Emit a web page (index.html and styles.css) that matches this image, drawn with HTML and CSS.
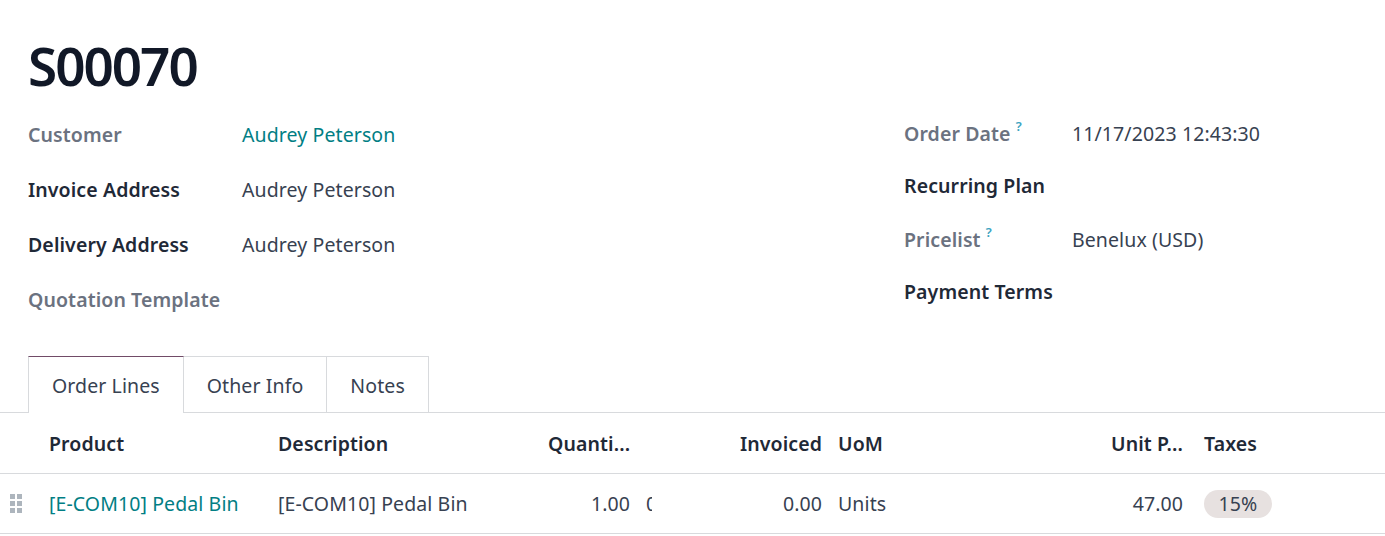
FILE: index.html
```html
<!DOCTYPE html>
<html>
  <head>
    <title>S00070</title>
    <link rel="stylesheet" href="styles.css">
  </head>
  <body>
    <div class="sheet">
      <h1 class="order-name">S00070</h1>
      <div class="groups">
        <div class="group group-left">
          <div class="field">
            <div class="label muted">Customer</div>
            <div class="value"><a class="link" href="#">Audrey Peterson</a></div>
          </div>
          <div class="field">
            <div class="label">Invoice Address</div>
            <div class="value">Audrey Peterson</div>
          </div>
          <div class="field">
            <div class="label">Delivery Address</div>
            <div class="value">Audrey Peterson</div>
          </div>
          <div class="field">
            <div class="label muted">Quotation Template</div>
            <div class="value"></div>
          </div>
        </div>
        <div class="group group-right">
          <div class="field short">
            <div class="label muted">Order Date <sup class="help">?</sup></div>
            <div class="value">11/17/2023 12:43:30</div>
          </div>
          <div class="field">
            <div class="label">Recurring Plan</div>
            <div class="value"></div>
          </div>
          <div class="field short">
            <div class="label muted">Pricelist <sup class="help">?</sup></div>
            <div class="value">Benelux (USD)</div>
          </div>
          <div class="field">
            <div class="label">Payment Terms</div>
            <div class="value"></div>
          </div>
        </div>
      </div>
    </div>

    <div class="tabs">
      <a class="tab active" href="#">Order Lines</a>
      <a class="tab" href="#">Other Info</a>
      <a class="tab" href="#">Notes</a>
    </div>

    <table class="lines">
      <colgroup>
        <col style="width: 41px">
        <col style="width: 229px">
        <col style="width: 270px">
        <col style="width: 98px">
        <col style="width: 14px">
        <col style="width: 178px">
        <col style="width: 270px">
        <col style="width: 96px">
        <col>
      </colgroup>
      <thead>
        <tr>
          <th></th>
          <th>Product</th>
          <th>Description</th>
          <th class="num">Quanti...</th>
          <th class="clip"></th>
          <th class="num">Invoiced</th>
          <th>UoM</th>
          <th class="num price">Unit P...</th>
          <th>Taxes</th>
        </tr>
      </thead>
      <tbody>
        <tr>
          <td class="handle"><span class="grip"></span></td>
          <td><a class="link" href="#">[E-COM10] Pedal Bin</a></td>
          <td>[E-COM10] Pedal Bin</td>
          <td class="num">1.00</td>
          <td class="clip"><span>0.00</span></td>
          <td class="num">0.00</td>
          <td>Units</td>
          <td class="num price">47.00</td>
          <td><span class="badge">15%</span></td>
        </tr>
      </tbody>
    </table>
  </body>
</html>
```

FILE: styles.css
```css
body {
  margin: 0;
  font-family: "Noto Sans", "Open Sans", sans-serif;
  font-size: 19.5px;
  letter-spacing: 0.1px;
  color: #374151;
  background: #ffffff;
}
.sheet {
  padding: 0 28px;
}
.order-name {
  margin: 0;
  padding-top: 30px;
  height: 78px;
  font-size: 53px;
  font-weight: 600;
  line-height: 72px;
  color: #111827;
  letter-spacing: -2px;
}
.groups {
  display: flex;
  padding-top: 13px;
}
.group-left {
  width: 876px;
}
.group-left .field {
  height: 55px;
}
.group-left .label {
  width: 214px;
}
.group-right {
  margin-top: -1px;
}
.group-right .field {
  height: 54px;
}
.group-right .field.short {
  height: 52px;
}
.group-right .label {
  width: 168px;
}
.field {
  display: flex;
  align-items: flex-start;
}
.label {
  flex: none;
  font-weight: 600;
  color: #1f2937;
  line-height: 28px;
}
.label.muted {
  color: #6b7280;
}
.value {
  line-height: 28px;
  color: #374151;
}
.help {
  font-size: 13px;
  color: #3aa3bf;
  font-weight: 600;
  vertical-align: 10px;
  line-height: 0;
}
.link {
  color: #017e84;
  text-decoration: none;
}
.tabs {
  display: flex;
  margin-top: 15px;
  padding-left: 28px;
  border-bottom: 1px solid #d8dadd;
}
.tab {
  display: block;
  height: 55px;
  line-height: 57px;
  padding: 0 23px;
  border: 1px solid #d8dadd;
  border-bottom: none;
  border-left: none;
  color: #374151;
  text-decoration: none;
}
.tab:first-child {
  border-left: 1px solid #d8dadd;
}
.tab.active {
  border-top: 1px solid #714b67;
  margin-bottom: -1px;
  height: 56px;
  background: #ffffff;
}
.lines {
  width: 100%;
  border-collapse: collapse;
  table-layout: fixed;
}
.lines th,
.lines td {
  padding: 0 8px;
  text-align: left;
  white-space: nowrap;
  overflow: hidden;
  border-bottom: 1px solid #d8dadd;
}
.lines th {
  height: 60px;
  font-weight: 600;
  color: #1f2937;
}
.lines td {
  height: 59px;
  color: #374151;
}
.lines .num {
  text-align: right;
}
.lines .price {
  padding-right: 13px;
}
.lines .clip {
  padding-right: 0;
  text-overflow: clip;
}
.handle {
  padding: 0 !important;
}
.grip {
  display: block;
  margin-left: 10px;
  width: 12px;
  height: 19px;
  background-image:
    linear-gradient(#adb5bd, #adb5bd), linear-gradient(#adb5bd, #adb5bd),
    linear-gradient(#adb5bd, #adb5bd), linear-gradient(#adb5bd, #adb5bd),
    linear-gradient(#adb5bd, #adb5bd), linear-gradient(#adb5bd, #adb5bd);
  background-size: 5px 5px;
  background-repeat: no-repeat;
  background-position: 0 0, 7px 0, 0 7px, 7px 7px, 0 14px, 7px 14px;
}
.badge {
  display: inline-block;
  width: 68px;
  height: 28px;
  line-height: 28px;
  text-align: center;
  border-radius: 14px;
  background: #e7e1e0;
  color: #374151;
}
```
